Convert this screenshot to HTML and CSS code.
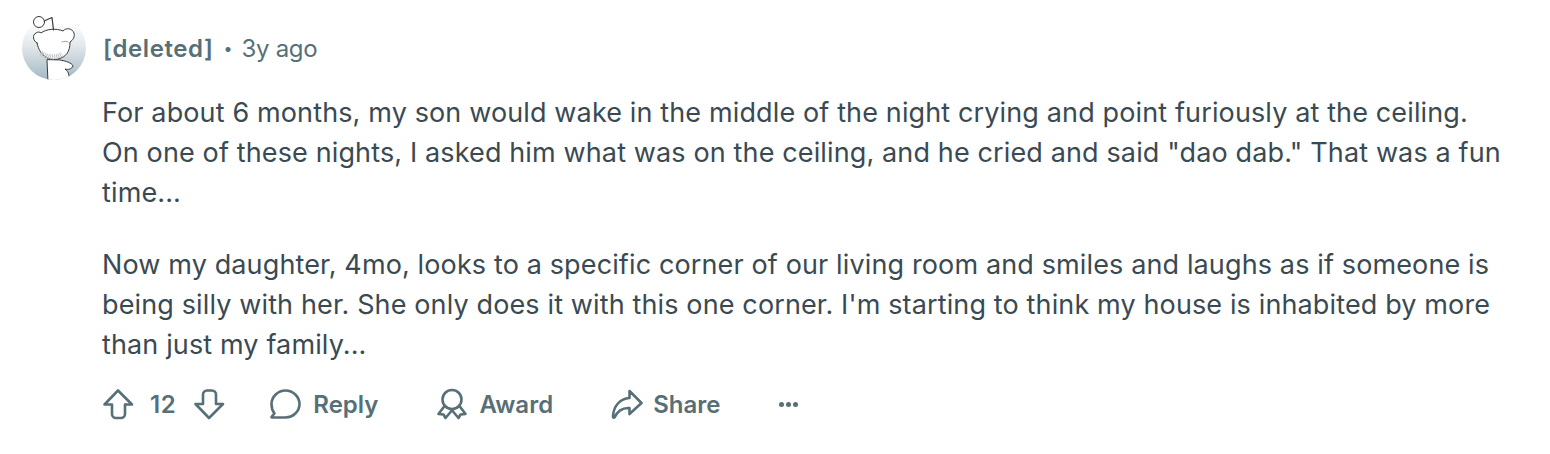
FILE: index.html
```html
<!DOCTYPE html>
<html lang="en">
<head>
<meta charset="utf-8">
<title>Comment</title>
<link rel="stylesheet" href="styles.css">
</head>
<body>
<article class="comment">
  <header class="meta">
    <svg class="avatar" viewBox="0 0 64 64" width="64" height="64" aria-hidden="true">
      <defs>
        <linearGradient id="fade" x1="0" y1="0" x2="0" y2="1">
          <stop offset="0.1" stop-color="#ffffff"/>
          <stop offset="0.45" stop-color="#e4e9ec"/>
          <stop offset="1" stop-color="#a3b8c4"/>
        </linearGradient>
        <clipPath id="round"><circle cx="32" cy="32" r="32"/></clipPath>
      </defs>
      <circle cx="32" cy="32" r="32" fill="url(#fade)"/>
      <g clip-path="url(#round)" fill="#fff" stroke="#3a3a3a" stroke-width="1" stroke-linecap="round" stroke-linejoin="round">
        <path d="M25 44 L26 66 H46 C48 60 47 56 43 53 C46 54 50 53 51 50 C50 47 44 45 38 44 Z"/>
      </g>
      <g fill="#fff" stroke="#3a3a3a" stroke-width="1" stroke-linecap="round" stroke-linejoin="round">
        <path d="M15 27 C11 25 10 19 14 17 C16 15.500 18 16 19 17 C24 13 34 12 41 15 C44 11.500 50 12 52 17 C53 21 51 24 48 26 C48 36 44 41 36 43 C28 45 18 41 15 27 Z"/>
        <path d="M22 5 L30 1.500 L31.500 14" fill="none" stroke-width="1.200"/>
        <circle cx="17" cy="6" r="5.500"/>
        <path d="M40 26 C42 25 45 25 46 26" fill="none" stroke="#9a9a9a"/>
      </g>
      <path d="M19 37 C26 42 35 42 40 38" fill="none" stroke="#b8bcbe" stroke-width="5" stroke-dasharray="1 1"/>
    </svg>
    <strong class="author">[deleted]</strong>
    <span class="dot">•</span>
    <time class="age">3y ago</time>
  </header>
  <div class="body">
    <p>For about 6 months, my son would wake in the middle of the night crying and point furiously at the ceiling. On one of these nights, I asked him what was on the ceiling, and he cried and said "dao dab." That was a fun time...</p>
    <p>Now my daughter, 4mo, looks to a specific corner of our living room and smiles and laughs as if someone is being silly with her. She only does it with this one corner. I'm starting to think my house is inhabited by more than just my family...</p>
  </div>
  <footer class="actions">
    <div class="votes">
      <svg class="icon" viewBox="0 0 32 32" aria-hidden="true"><path d="M16 2.500 L30 16.500 H23 V26 A4 4 0 0 1 19 30 H14 A4 4 0 0 1 10 26 V16.500 H2.500 Z"/></svg>
      <span class="score">12</span>
      <svg class="icon" viewBox="0 0 32 32" aria-hidden="true"><path d="M16 30 L30 16 H23 V6.500 A4 4 0 0 0 19 2.500 H14 A4 4 0 0 0 10 6.500 V16 H2.500 Z"/></svg>
    </div>
    <div class="action reply">
      <svg class="icon" viewBox="0 0 32 32" aria-hidden="true"><path d="M16.500 2.500 C24 2.500 30.500 8.500 30.500 16 C30.500 23.500 24 29.500 16.500 29.500 H3 C2.500 29.500 2.300 29 2.700 28.600 L5.500 25.500 C3.500 23 2.500 20 2.500 16 C2.500 8.500 9 2.500 16.500 2.500 Z"/></svg>
      <span>Reply</span>
    </div>
    <div class="action award">
      <svg class="icon" viewBox="0 0 32 32" aria-hidden="true"><circle cx="16" cy="11.500" r="9.500"/><path d="M8.500 18 L2.500 26 L7.500 26.500 L9.500 30 L15 23.500 L16 22 L17 23.500 L22.500 30 L24.500 26.500 L29.500 26 L23.500 18"/></svg>
      <span>Award</span>
    </div>
    <div class="action share">
      <svg class="icon" viewBox="0 0 32 32" aria-hidden="true"><path d="M18.500 3 L30.500 15 L18.500 26 V20 C11 19.500 6.500 23 3.500 29.500 C2.800 30 2 29.500 2 28.500 C2.500 18 9 10.500 18.500 10 Z"/></svg>
      <span>Share</span>
    </div>
    <div class="more" aria-label="More"><i></i><i></i><i></i></div>
  </footer>
</article>
</body>
</html>
```
FILE: styles.css
```css
* { box-sizing: border-box; }
html, body { margin: 0; background: #fff; }
body {
  width: 1550px;
  height: 454px;
  overflow: hidden;
  font-family: Inter, "Liberation Sans", sans-serif;
  color: #576f76;
}
.comment { padding: 16px 45px 0 22px; }
.meta {
  display: flex;
  align-items: center;
  height: 64px;
  font-size: 24px;
}
.avatar { flex: none; margin-right: 17px; }
.author { font-weight: 600; letter-spacing: 0.6px; }
.dot { margin: 0 9px 0 10px; font-size: 16px; }
.age { font-weight: 400; letter-spacing: -0.3px; }
.body {
  margin: 13px 0 0 80px;
  font-size: 27px;
  line-height: 40px;
  letter-spacing: 0.13px;
  color: #3a4a52;
}
.body p { margin: 0 0 32px; }
.body p:last-child { margin-bottom: 0; }
.actions {
  display: flex;
  align-items: center;
  margin: 19px 0 0 80px;
  height: 40px;
  font-size: 24px;
  font-weight: 600;
}
.icon {
  width: 32px;
  height: 32px;
  flex: none;
  fill: none;
  stroke: #576f76;
  stroke-width: 2.6;
  stroke-linejoin: round;
  stroke-linecap: round;
}
.votes { display: flex; align-items: center; gap: 16px; margin-right: 44px; }
.score { letter-spacing: 0.6px; margin-right: 1px; }
.action { display: flex; align-items: center; gap: 11px; margin-right: 58px; }
.reply { gap: 12px; }
.share { gap: 10px; }
.more { display: flex; gap: 2px; margin-left: 1px; }
.more i { width: 5px; height: 5px; border-radius: 50%; background: #576f76; }
```
